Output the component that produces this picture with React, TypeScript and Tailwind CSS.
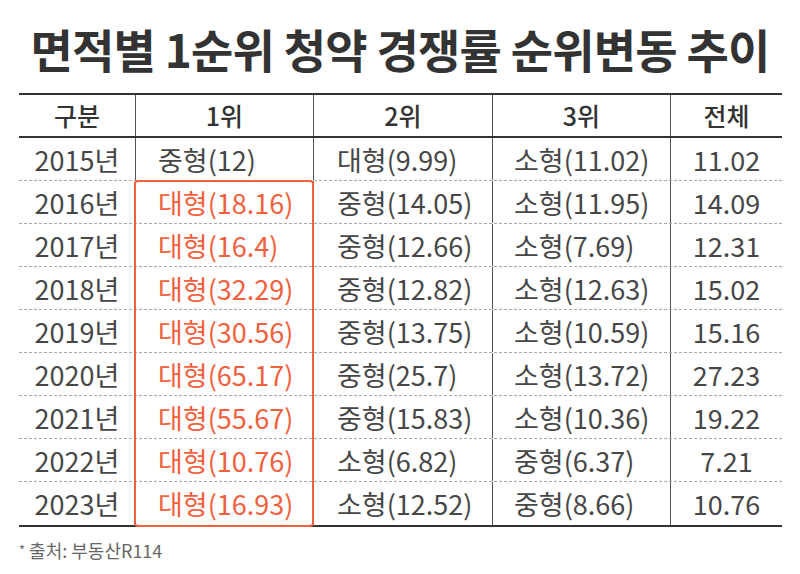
import React from "react";

const rows: [string, string, string, string, string][] = [
  ["2015년", "중형(12)", "대형(9.99)", "소형(11.02)", "11.02"],
  ["2016년", "대형(18.16)", "중형(14.05)", "소형(11.95)", "14.09"],
  ["2017년", "대형(16.4)", "중형(12.66)", "소형(7.69)", "12.31"],
  ["2018년", "대형(32.29)", "중형(12.82)", "소형(12.63)", "15.02"],
  ["2019년", "대형(30.56)", "중형(13.75)", "소형(10.59)", "15.16"],
  ["2020년", "대형(65.17)", "중형(25.7)", "소형(13.72)", "27.23"],
  ["2021년", "대형(55.67)", "중형(15.83)", "소형(10.36)", "19.22"],
  ["2022년", "대형(10.76)", "소형(6.82)", "중형(6.37)", "7.21"],
  ["2023년", "대형(16.93)", "소형(12.52)", "중형(8.66)", "10.76"],
];

const grid = "grid grid-cols-[116px_178px_179px_178px_112px]";

export default function App() {
  return (
    <div
      className="w-[800px] h-[574px] bg-white text-[#474747]"
      style={{ fontFamily: '"Noto Sans CJK KR", "Noto Sans", sans-serif' }}
    >
      <div className="h-[93px] pt-[2px] flex items-center justify-center">
        <h1 className="text-[46px] font-bold text-[#333] tracking-[-0.8px] leading-none">
          면적별 1순위 청약 경쟁률 순위변동 추이
        </h1>
      </div>
      <div className="relative ml-[19px] w-[763px] border-t-2 border-b-2 border-[#333]">
        <div className={`${grid} h-[43px] border-b-2 border-[#333] text-[25px] font-medium text-[#333]`}>
          {["구분", "1위", "2위", "3위", "전체"].map((h, i) => (
            <div
              key={h}
              className={`flex items-center justify-center leading-none ${i > 0 ? "border-l border-[#555]" : ""}`}
            >
              {h}
            </div>
          ))}
        </div>
        {rows.map((r, ri) => (
          <div
            key={r[0]}
            className={`${grid} h-[43px] text-[27px] leading-none ${ri < rows.length - 1 ? "border-b border-dashed border-[#aaa]" : ""}`}
          >
            <div className="flex items-center justify-center">{r[0]}</div>
            <div
              className={`flex items-center pl-[22px] border-l border-[#555] ${ri > 0 ? "text-[#f2603e]" : ""}`}
            >
              {r[1]}
            </div>
            <div className="flex items-center pl-[23px] border-l border-[#555]">{r[2]}</div>
            <div className="flex items-center pl-[21px] border-l border-[#555]">{r[3]}</div>
            <div className="flex items-center justify-center border-l border-[#555]">{r[4]}</div>
          </div>
        ))}
        <div className="absolute left-[115px] top-[85px] bottom-[-2px] w-[180px] rounded-[4px] border-2 border-[#f0603f]" />
      </div>
      <div className="ml-[19px] mt-[14px] text-[18px] text-[#666] leading-none">
        <span className="text-[13px] align-[3px]">*</span> 출처: 부동산R114
      </div>
    </div>
  );
}
